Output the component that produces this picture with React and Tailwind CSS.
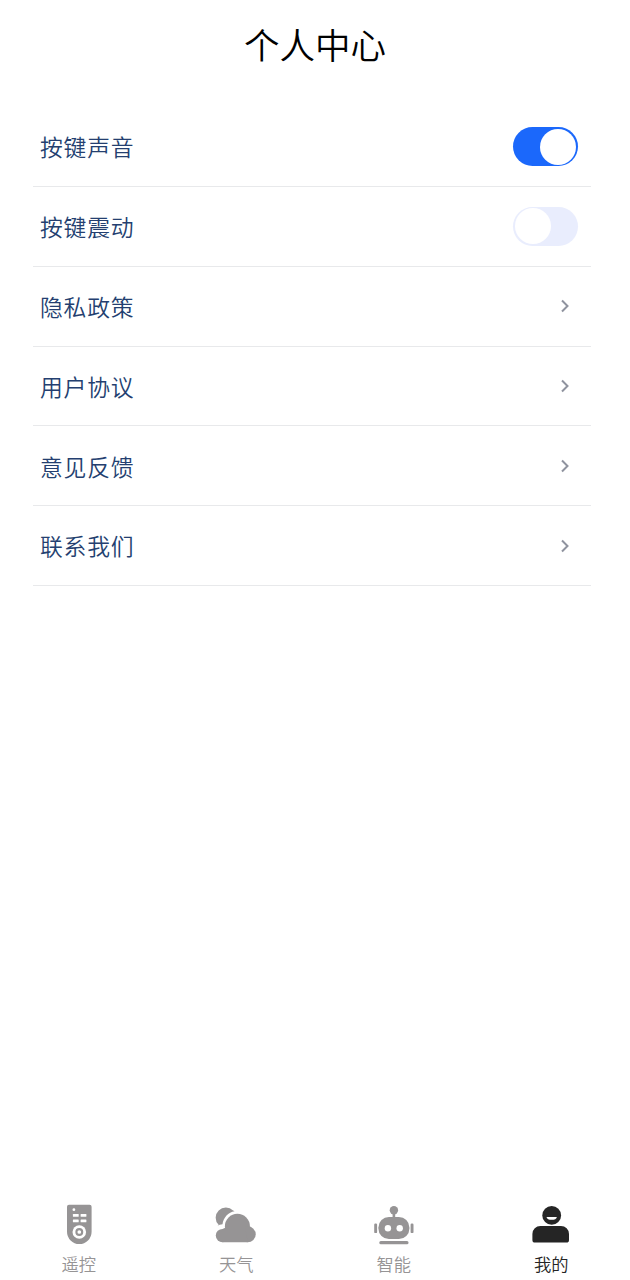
import { useState } from "react";

const links = ["隐私政策", "用户协议", "意见反馈", "联系我们"];

function RemoteIcon() {
  return (
    <svg viewBox="0 0 42 42" className="w-[42px] h-[42px]" fill="currentColor">
      <path d="M11 .7h20.6a2 2 0 0 1 2 2v25a12.3 12.3 0 0 1-24.6 0v-25a2 2 0 0 1 2-2z" />
      <g fill="#fff">
        <circle cx="15.9" cy="5.7" r="1.4" />
        <rect x="14.9" y="10.1" width="5.8" height="2.7" rx=".5" />
        <rect x="22.6" y="10.1" width="5.8" height="2.7" rx=".5" />
        <rect x="14.9" y="15.5" width="5.8" height="2.7" rx=".5" />
        <rect x="22.6" y="15.5" width="5.8" height="2.7" rx=".5" />
        <circle cx="21.3" cy="28" r="6.8" />
      </g>
      <circle cx="21.3" cy="28" r="2.9" fill="none" stroke="currentColor" strokeWidth="2.1" />
    </svg>
  );
}

function WeatherIcon() {
  return (
    <svg viewBox="0 0 42 42" className="w-[42px] h-[42px]" fill="currentColor">
      <path d="M2.4 22L3.6 20.8A10 10 0 0 1 18.100 6.500L19.600 7.200C13.300 8.400 8.400 13.200 7.500 20.200C5.600 20.300 3.800 21 2.400 22z" />
      <circle cx="22.4" cy="22.3" r="12.5" />
      <circle cx="7.5" cy="31.6" r="6.7" />
      <circle cx="32.7" cy="30.3" r="8" />
      <path d="M7.5 24.9L14 22h16l2.7 16.300H7.500z" />
    </svg>
  );
}

function RobotIcon() {
  return (
    <svg viewBox="0 0 42 42" className="w-[42px] h-[42px]" fill="currentColor">
      <circle cx="20.9" cy="6.3" r="4.2" />
      <rect x="19.6" y="8" width="2.6" height="6" />
      <rect x="5.4" y="12.9" width="31" height="22.2" rx="10.5" />
      <rect x="1.2" y="19.6" width="2.9" height="9.5" rx="1.2" />
      <rect x="37.6" y="19.6" width="2.9" height="9.5" rx="1.2" />
      <rect x="6.3" y="36.9" width="29.2" height="3.3" rx="1.5" />
      <circle cx="14.9" cy="24.3" r="3.2" fill="#fff" />
      <circle cx="26.7" cy="24.3" r="3.2" fill="#fff" />
    </svg>
  );
}

function UserIcon() {
  return (
    <svg viewBox="0 0 42 42" className="w-[42px] h-[42px]" fill="currentColor">
      <circle cx="21.7" cy="11.4" r="9.4" />
      <path d="M16.5 12.900h10.400c-.3 2-2.400 2.900-5.200 2.900s-4.900-.9-5.200-2.900z" fill="#fff" />
      <path d="M10.400 22H31a8 8 0 0 1 8 8v6a2.600 2.600 0 0 1-2.600 2.600H5A2.600 2.600 0 0 1 2.400 36v-6a8 8 0 0 1 8-8z" />
    </svg>
  );
}

const tabs = [
  { label: "遥控", icon: RemoteIcon },
  { label: "天气", icon: WeatherIcon },
  { label: "智能", icon: RobotIcon },
  { label: "我的", icon: UserIcon },
];

function Row({ label, children }) {
  return (
    <div className="flex items-center justify-between h-[79.8px] pl-[7px] pr-[13px] border-b border-[#e8e9eb]">
      <span className="pt-[2px] text-[22.8px] tracking-[0.8px] font-[350] text-[#243f70]">{label}</span>
      {children}
    </div>
  );
}

function Switch({ checked, onChange }) {
  return (
    <button
      role="switch"
      aria-checked={checked}
      onClick={() => onChange(!checked)}
      className={`flex items-center w-[65px] h-[39px] px-[2px] rounded-full ${
        checked ? "bg-[#1b68fb] justify-end" : "bg-[#e9edfd] justify-start"
      }`}
    >
      <span className="w-9 h-9 rounded-full bg-white" />
    </button>
  );
}

export default function App() {
  const [sound, setSound] = useState(true);
  const [vibrate, setVibrate] = useState(false);
  const [active, setActive] = useState("我的");

  return (
    <div className="flex flex-col h-screen bg-white font-['Noto_Sans_CJK_SC',sans-serif]">
      <header className="flex items-center justify-center h-[88px] shrink-0">
        <h1 className="text-[35.5px] leading-none font-[350] text-black">个人中心</h1>
      </header>

      <main className="flex-1 pt-[19.2px] pl-[33px] pr-[39px]">
        <Row label="按键声音">
          <Switch checked={sound} onChange={setSound} />
        </Row>
        <Row label="按键震动">
          <Switch checked={vibrate} onChange={setVibrate} />
        </Row>
        {links.map((label) => (
          <Row key={label} label={label}>
            <svg
              viewBox="0 0 12 16"
              className="w-3 h-4 mr-[7px]"
              fill="none"
              stroke="#8f939f"
              strokeWidth="2"
            >
              <path d="M3 2.500L8.500 8L3 13.500" />
            </svg>
          </Row>
        ))}
      </main>

      <nav className="grid grid-cols-4 h-[76px] shrink-0">
        {tabs.map(({ label, icon: Icon }) => (
          <button
            key={label}
            onClick={() => setActive(label)}
            className={`flex flex-col items-center ${
              active === label ? "text-[#252525]" : "text-[#969495]"
            }`}
          >
            <Icon />
            <span className="mt-[6px] text-[17.3px] leading-6 font-[350]">{label}</span>
          </button>
        ))}
      </nav>
    </div>
  );
}
